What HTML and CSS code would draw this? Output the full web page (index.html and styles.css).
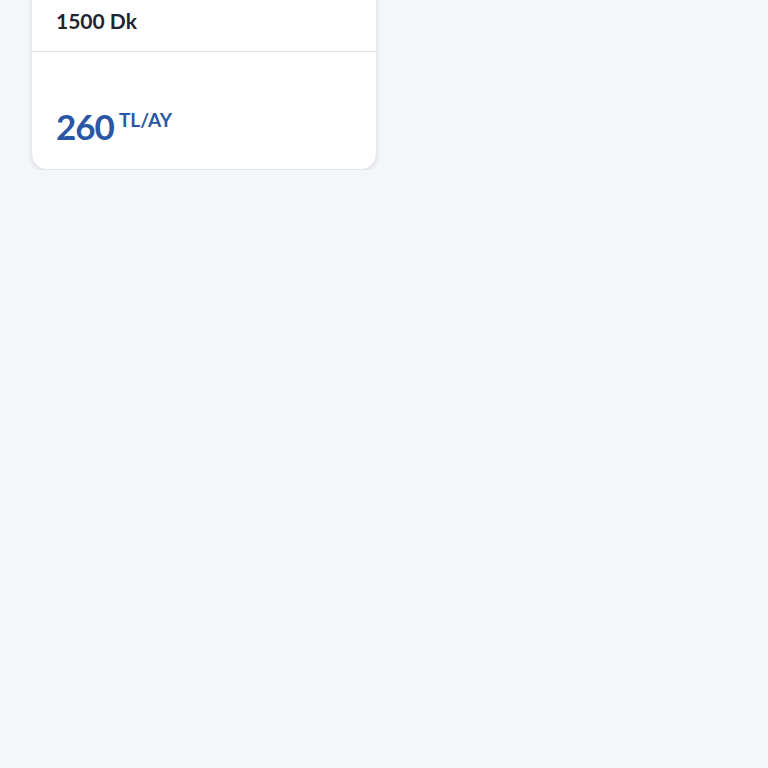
FILE: index.html
```html
<!DOCTYPE html>
<html lang="tr">
<head>
  <meta charset="UTF-8">
  <meta name="viewport" content="width=device-width, initial-scale=1.0">
  <title>Tarife</title>
  <link rel="stylesheet" href="styles.css">
</head>
<body>
  <div class="page">
    <!-- tarife kartı -->
    <div class="plan-card">
      <div class="plan-features">
        <div class="feature">1500 Dk</div>
      </div>
      <div class="plan-price">
        <span class="amount">260</span>
        <span class="unit">TL/AY</span>
      </div>
    </div>
  </div>
</body>
</html>
```

FILE: styles.css
```css
body {
  margin: 0;
  padding: 0;
  background-color: #f4f6f9;
  font-family: Lato, "Open Sans", sans-serif;
}

.page {
  padding: 0 391px 0 31px;
  margin-top: -40px;
}

.plan-card {
  background: #fff;
  border: 1px solid #e4e7ec;
  border-radius: 16px;
  box-shadow: 0 2px 5px rgba(0, 0, 0, 0.09);
  overflow: hidden;
}

.plan-features {
  padding: 49px 24px 20px;
  border-bottom: 1px solid #dfe3ea;
}

.feature {
  font-size: 21px;
  font-weight: 700;
  color: #1f2530;
  line-height: 21px;
}

.plan-price {
  height: 117px;
  padding: 57px 24px 0;
  box-sizing: border-box;
  display: flex;
  align-items: flex-start;
}

.amount {
  font-size: 35px;
  font-weight: 700;
  color: #2a56a6;
  line-height: 35px;
  letter-spacing: -1px;
}

.unit {
  font-size: 19px;
  font-weight: 700;
  color: #2a56a6;
  line-height: 19px;
  margin: 1px 0 0 5px;
}
```
